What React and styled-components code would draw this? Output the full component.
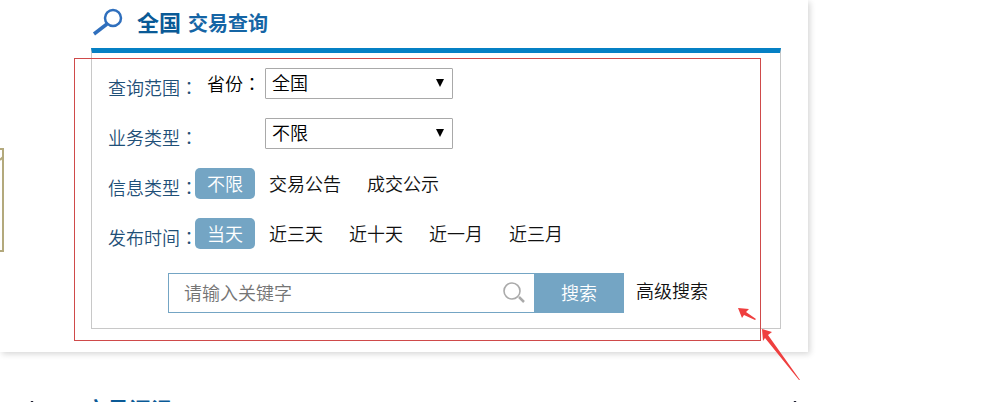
import React from 'react'
import styled, { createGlobalStyle } from 'styled-components'

const colors = {
  bar: '#0580c4',
  title: '#0a5a96',
  subtitle: '#1565a5',
  label: '#1f5078',
  accent: '#74a5c4',
  text: '#111',
  mark: '#cf4a4a'
}

const GlobalStyle = createGlobalStyle`
  * {
    box-sizing: border-box;
  }
  body {
    margin: 0;
    background: #fff;
    overflow: hidden;
  }
  body, button, input, select {
    font-family: "Noto Sans CJK SC", sans-serif;
    font-size: 18px;
    font-weight: 350;
    line-height: 26px;
  }
`

const infoTypes = ['不限', '交易公告', '成交公示']
const periods = ['当天', '近三天', '近十天', '近一月', '近三月']

const Options = ({ items, label }) => {
  const [active, setActive] = React.useState(items[0])
  return (
    <Pills role="group" aria-label={label}>
      {items.map(item => (
        <Pill key={item} type="button" $active={item === active} onClick={() => setActive(item)}>
          {item}
        </Pill>
      ))}
    </Pills>
  )
}

const Select = ({ id, value }) => (
  <SelectBox>
    <NativeSelect id={id} defaultValue={value}>
      <option>{value}</option>
    </NativeSelect>
    <Caret viewBox="0 0 8 8"><path d="M0 0h8L4 8z" /></Caret>
  </SelectBox>
)

const Tip = () => (
  <svg width="8" height="8" viewBox="0 0 8 8"><path d="M3 0h2l3 8H0z" fill="#223" /></svg>
)

export default function App () {
  return (
    <Page>
      <GlobalStyle />
      <Card>
        <Side>
          <svg width="5" height="104" viewBox="0 0 5 104" fill="none" stroke="#b3a97c" strokeWidth="2">
            <path d="M0 1h3v102H0M0 12l3-3" />
          </svg>
        </Side>
        <Content>
          <Heading>
            <svg width="32" height="28" viewBox="0 0 32 28" fill="none" stroke="#2f6fbd">
              <circle cx="22" cy="10" r="8" strokeWidth="2.5" />
              <path d="M16 16L3 26" strokeWidth="3.5" />
            </svg>
            <Title>全国<small>交易查询</small></Title>
          </Heading>
          <Panel>
            <Row>
              <Label>查询范围<Colon>：</Colon></Label>
              <SubLabel htmlFor="province">省份<Colon>：</Colon></SubLabel>
              <Select id="province" value="全国" />
            </Row>
            <Row>
              <Label as="label" htmlFor="business">业务类型<Colon>：</Colon></Label>
              <SubLabel as="span" />
              <Select id="business" value="不限" />
            </Row>
            <Row>
              <Label>信息类型<Colon>：</Colon></Label>
              <Options items={infoTypes} label="信息类型" />
            </Row>
            <Row>
              <Label>发布时间<Colon>：</Colon></Label>
              <Options items={periods} label="发布时间" />
            </Row>
            <Search onSubmit={e => e.preventDefault()}>
              <Field>
                <Keyword type="text" placeholder="请输入关键字" aria-label="请输入关键字" />
                <svg width="22" height="22" viewBox="0 0 22 22" fill="none" stroke="#aaa">
                  <circle cx="9" cy="9" r="8" strokeWidth="1.6" />
                  <path d="M16 15l5 5" strokeWidth="2.5" />
                </svg>
              </Field>
              <Submit type="submit">搜索</Submit>
              <Advanced href="#advanced">高级搜索</Advanced>
            </Search>
          </Panel>
        </Content>
        <Outline />
        <Arrows viewBox="0 0 64 75" fill="#ef3f3f">
          <path d="M0 1l11 1-3 3 10 7-1 1-11-5-2 3z" />
          <path d="M24 22l10 3-4 3 32 45h-1L27 31l-2 3z" />
        </Arrows>
      </Card>
      <Next>
        <Tip />
        <NextTitle>交易问讯</NextTitle>
        <Tip />
      </Next>
    </Page>
  )
}

const Page = styled.div`
  height: 100vh;
  overflow: hidden;
`
const Card = styled.section`
  position: relative;
  display: flex;
  margin-right: 193px;
  padding: 8px 27px 23px 0;
  background: #fff;
  box-shadow: 2px 2px 6px rgba(0, 0, 0, 0.16);
`
const Side = styled.div`
  flex: 0 0 91px;
  padding-top: 140px;
  > svg {
    display: block;
  }
`
const Content = styled.div`
  flex: 1;
  min-width: 0;
`
const Heading = styled.header`
  display: flex;
  align-items: center;
  gap: 14px;
  height: 40px;
  padding-bottom: 13px;
  > svg {
    flex: none;
  }
`
const Title = styled.h2`
  margin: 0;
  color: ${colors.title};
  font-size: 22px;
  font-weight: 700;
  line-height: 28px;
  small {
    margin-left: 7px;
    color: ${colors.subtitle};
    font-size: 20px;
  }
`
const Panel = styled.div`
  padding: 15px 16px;
  border: 1px solid #c8c8c8;
  border-top: 5px solid ${colors.bar};
`
const Row = styled.div`
  display: flex;
  align-items: flex-start;
  height: 50px;
`
const Label = styled.span`
  flex: 0 0 87px;
  min-width: 0;
  padding-top: 6px;
  color: ${colors.label};
  white-space: nowrap;
`
const SubLabel = styled.label`
  flex: 0 0 70px;
  min-width: 0;
  padding: 2px 0 0 12px;
  color: #000;
  white-space: nowrap;
`
// TC face keeps the full-width colon centred
const Colon = styled.span`
  font-family: "Noto Sans CJK TC", sans-serif;
`
const SelectBox = styled.div`
  position: relative;
  width: 188px;
`
const NativeSelect = styled.select`
  display: block;
  width: 100%;
  height: 31px;
  padding: 0 6px 3px;
  appearance: none;
  color: #000;
  background: #fff;
  border: 1px solid #a9a9a9;
  border-radius: 1px;
`
const Caret = styled.svg`
  position: absolute;
  top: 11px;
  right: 9px;
  width: 8px;
  height: 8px;
  pointer-events: none;
`
const Pills = styled.div`
  display: flex;
  gap: 2px;
`
const Pill = styled.button`
  height: 31px;
  padding: 0 12px 2px;
  color: ${({ $active }) => ($active ? '#fff' : colors.text)};
  background: ${({ $active }) => ($active ? colors.accent : 'transparent')};
  border: 0;
  border-radius: 5px;
  cursor: pointer;
`
const Search = styled.form`
  display: flex;
  align-items: flex-start;
  padding: 5px 0 0 60px;
`
const Field = styled.div`
  display: flex;
  align-items: center;
  flex: 0 1 366px;
  height: 40px;
  padding: 0 9px 0 15px;
  border: 1px solid ${colors.accent};
  border-right: 0;
`
const Keyword = styled.input`
  flex: 1;
  min-width: 0;
  padding: 0 0 2px;
  background: none;
  border: 0;
  outline: 0;
  &::placeholder {
    color: #757575;
  }
`
const Submit = styled.button`
  width: 90px;
  height: 40px;
  padding: 0 0 2px;
  color: #fff;
  background: ${colors.accent};
  border: 0;
  cursor: pointer;
`
const Advanced = styled.a`
  padding: 4px 0 0 12px;
  color: ${colors.text};
  text-decoration: none;
  white-space: nowrap;
`
// annotation lying over the form
const Outline = styled.div`
  position: absolute;
  top: 58px;
  right: 47px;
  bottom: 11px;
  left: 74px;
  border: 1px solid ${colors.mark};
  pointer-events: none;
`
const Arrows = styled.svg`
  position: absolute;
  right: 6px;
  bottom: -30px;
  width: 64px;
  height: 75px;
  pointer-events: none;
`
const Next = styled.section`
  display: flex;
  align-items: flex-start;
  margin-right: 193px;
  padding: 42px 9px 0 28px;
  > svg {
    flex: none;
    margin-top: 7px;
  }
`
const NextTitle = styled.h2`
  flex: 1;
  margin: 0;
  padding-left: 49px;
  color: ${colors.title};
  font-size: 22px;
  font-weight: 700;
  line-height: 28px;
`
